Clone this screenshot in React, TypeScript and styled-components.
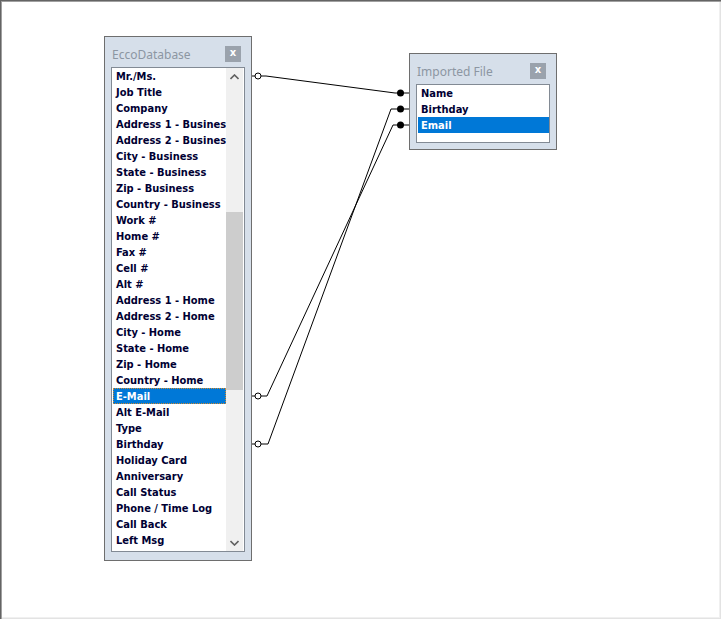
import React from 'react';
import styled, { createGlobalStyle } from 'styled-components';

const GlobalStyle = createGlobalStyle`
  html, body {
    margin: 0;
    padding: 0;
    background: #ffffff;
  }
`;

type Field = { name: string; selected?: boolean; focused?: boolean };

const eccoFields: Field[] = [
  { name: 'Mr./Ms.' },
  { name: 'Job Title' },
  { name: 'Company' },
  { name: 'Address 1 - Business' },
  { name: 'Address 2 - Business' },
  { name: 'City - Business' },
  { name: 'State - Business' },
  { name: 'Zip - Business' },
  { name: 'Country - Business' },
  { name: 'Work #' },
  { name: 'Home #' },
  { name: 'Fax #' },
  { name: 'Cell #' },
  { name: 'Alt #' },
  { name: 'Address 1 - Home' },
  { name: 'Address 2 - Home' },
  { name: 'City - Home' },
  { name: 'State - Home' },
  { name: 'Zip - Home' },
  { name: 'Country - Home' },
  { name: 'E-Mail', selected: true, focused: true },
  { name: 'Alt E-Mail' },
  { name: 'Type' },
  { name: 'Birthday' },
  { name: 'Holiday Card' },
  { name: 'Anniversary' },
  { name: 'Call Status' },
  { name: 'Phone / Time Log' },
  { name: 'Call Back' },
  { name: 'Left Msg' },
];

const importedFields: Field[] = [
  { name: 'Name' },
  { name: 'Birthday' },
  { name: 'Email', selected: true },
];

// left point (open circle) -> right point (filled dot), page coords
const links = [
  { from: 76, to: 93, bend: [266, 395] },
  { from: 396, to: 125, bend: [267, 393] },
  { from: 444, to: 109, bend: [268, 391] },
];

export default function App() {
  return (
    <>
      <GlobalStyle />
      <Canvas>
        <Connectors width={721} height={619}>
          {links.map((l, i) => (
            <g key={i}>
              <polyline
                points={`251,${l.from} 255,${l.from}`}
                fill="none"
                stroke="#000"
                strokeWidth={1}
              />
              <polyline
                points={`261,${l.from} ${l.bend[0]},${l.from} ${l.bend[1]},${l.to} 409,${l.to}`}
                fill="none"
                stroke="#000"
                strokeWidth={1}
              />
              <circle cx={258} cy={l.from} r={3} fill="#fff" stroke="#000" strokeWidth={1} />
              <circle cx={400.5} cy={l.to} r={3.5} fill="#000" />
            </g>
          ))}
        </Connectors>

        <Table $left={104} $top={36} $bottomPad={8}>
          <TitleRow>
            <Title>EccoDatabase</Title>
            <CloseButton type="button">x</CloseButton>
          </TitleRow>
          <ListBox $height={485}>
            <Items>
              {eccoFields.map((f) => (
                <Item key={f.name} $selected={f.selected} $focused={f.focused}>
                  {f.name}
                </Item>
              ))}
            </Items>
            <ScrollBar>
              <Arrow>
                <svg width="9" height="6" viewBox="0 0 9 6">
                  <path d="M0.5 5 L4.5 1 L8.5 5" fill="none" stroke="#606060" strokeWidth="1.6" />
                </svg>
              </Arrow>
              <Track>
                <Thumb />
              </Track>
              <Arrow>
                <svg width="9" height="6" viewBox="0 0 9 6">
                  <path d="M0.5 1 L4.5 5 L8.5 1" fill="none" stroke="#606060" strokeWidth="1.6" />
                </svg>
              </Arrow>
            </ScrollBar>
          </ListBox>
        </Table>

        <Table $left={409} $top={53} $bottomPad={6}>
          <TitleRow>
            <Title>Imported File</Title>
            <CloseButton type="button">x</CloseButton>
          </TitleRow>
          <ListBox $height={59}>
            <Items>
              {importedFields.map((f) => (
                <Item key={f.name} $selected={f.selected}>
                  {f.name}
                </Item>
              ))}
            </Items>
          </ListBox>
        </Table>
      </Canvas>
    </>
  );
}

const Canvas = styled.div`
  position: relative;
  width: 721px;
  height: 619px;
  overflow: hidden;
  background: #ffffff;
  box-shadow: inset 1px 1px 0 #646464, inset 2px 2px 0 #a0a0a0,
    inset -1px -1px 0 #e3e3e3, inset -2px -2px 0 #f0f0f0;
`;

const Connectors = styled.svg`
  position: absolute;
  left: 0;
  top: 0;
  pointer-events: none;
`;

const Table = styled.div<{ $left: number; $top: number; $bottomPad: number }>`
  position: absolute;
  left: ${(p) => p.$left}px;
  top: ${(p) => p.$top}px;
  width: 148px;
  box-sizing: border-box;
  border: 1px solid #6e6e6e;
  background: #d6dfea;
  padding: 0 6px ${(p) => p.$bottomPad}px 6px;
  display: flex;
  flex-direction: column;
`;

const TitleRow = styled.div`
  height: 30px;
  box-sizing: border-box;
  padding: 4px 4px 0 1px;
  display: flex;
  align-items: center;
  justify-content: space-between;
`;

const Title = styled.span`
  font-family: 'Noto Sans', 'Open Sans', sans-serif;
  font-size: 12px;
  color: #8c96a2;
`;

const CloseButton = styled.button`
  width: 16px;
  height: 16px;
  padding: 0 0 2px 0;
  border: none;
  background: #9aa2ac;
  color: #ffffff;
  font-family: 'DejaVu Sans', sans-serif;
  font-weight: bold;
  font-size: 10px;
  line-height: 14px;
  display: flex;
  align-items: center;
  justify-content: center;
`;

const ListBox = styled.div<{ $height: number }>`
  height: ${(p) => p.$height}px;
  box-sizing: border-box;
  border: 1px solid #828a94;
  background: #ffffff;
  display: flex;
  overflow: hidden;
`;

const Items = styled.ul`
  flex: 1;
  min-width: 0;
  margin: 0;
  padding: 0 0 0 1px;
  list-style: none;
  overflow: hidden;
`;

const Item = styled.li<{ $selected?: boolean; $focused?: boolean }>`
  height: 16px;
  box-sizing: border-box;
  padding: 2px 0 0 3px;
  white-space: nowrap;
  overflow: hidden;
  font-family: 'DejaVu Sans Condensed', 'DejaVu Sans', sans-serif;
  font-weight: bold;
  font-size: 11px;
  line-height: 14px;
  color: ${(p) => (p.$selected ? '#ffffff' : '#000033')};
  background: ${(p) => (p.$selected ? '#0078d7' : 'transparent')};
  outline: ${(p) => (p.$focused ? '1px dotted #d08a30' : 'none')};
  outline-offset: -1px;
`;

const ScrollBar = styled.div`
  width: 17px;
  margin-right: 1px;
  background: #f0f0f0;
  display: flex;
  flex-direction: column;
`;

const Arrow = styled.div`
  height: 17px;
  display: flex;
  align-items: center;
  justify-content: center;
`;

const Track = styled.div`
  flex: 1;
  position: relative;
`;

const Thumb = styled.div`
  position: absolute;
  left: 0;
  right: 0;
  top: 127px;
  height: 178px;
  background: #cdcdcd;
`;
